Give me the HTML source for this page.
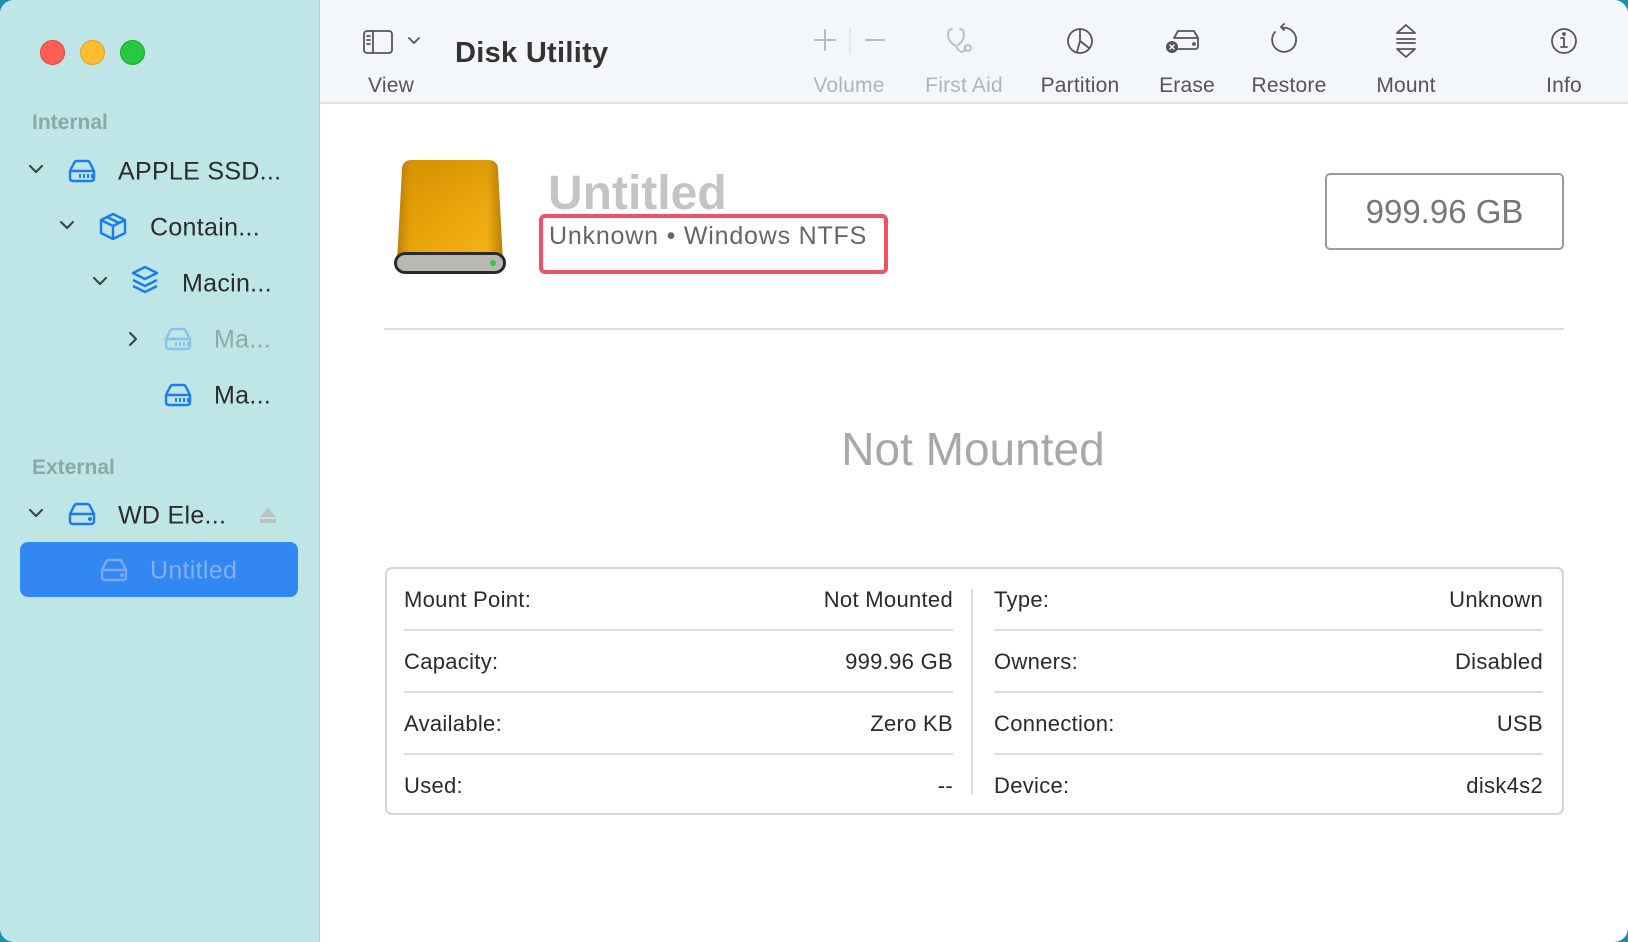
<!DOCTYPE html>
<html><head><meta charset="utf-8"><style>
*{margin:0;padding:0;box-sizing:border-box}
body{width:1628px;height:942px;overflow:hidden;background:#1f8fa6;font-family:"Liberation Sans",sans-serif;position:relative}
.win{position:absolute;left:0;top:0;width:1628px;height:942px;border-radius:14px;overflow:hidden;background:#fff}
.side{position:absolute;left:0;top:0;width:320px;height:942px;background:#bfe6e6;border-right:1px solid #b4d4d4}
.tb{position:absolute;left:320px;top:0;right:0;height:104px;background:#f3f7f9;border-bottom:2px solid #dde1e3}
.a{position:absolute;white-space:nowrap}
.dot{position:absolute;width:25px;height:25px;border-radius:50%;top:40px}
.sl{font-size:21px;font-weight:bold;color:#8aa8a8}
.it{font-size:25px;color:#2b2b2b;transform:translateY(-50%);letter-spacing:.3px}
.lab{font-size:21px;color:#555;transform:translateX(-50%);top:74px;letter-spacing:.2px}
.dim{color:#b0b4b6}
.row{font-size:22px;color:#2a2a2a;letter-spacing:.3px}
.hr{position:absolute;height:2px;background:#dcdcdc}
</style></head><body><div class="win">
<div class="side"></div>
<div class="dot" style="left:40px;background:#ff5f57;border:1px solid #e14640"></div>
<div class="dot" style="left:80px;background:#febc2e;border:1px solid #dfa123"></div>
<div class="dot" style="left:120px;background:#28c840;border:1px solid #1aab29"></div>
<div class="a sl" style="left:32px;top:111px">Internal</div>
<div class="a sl" style="left:32px;top:456px">External</div>

<svg width="320" height="942" style="position:absolute;left:0;top:0">
<defs>
<g id="hd"><path d="M4 10 L8 2 Q9 0 11 0 H21 Q23 0 24 2 L28 10 V17 Q28 20 25 20 H7 Q4 20 4 17 Z M4 10 H28" fill="none" stroke-width="2.4" stroke-linejoin="round"/></g>
</defs>
<g fill="none" stroke="#3b4a4a" stroke-width="2.2" stroke-linecap="round" stroke-linejoin="round">
<path d="M30 166 l6 6 l6 -6"/><path d="M61 222 l6 6 l6 -6"/><path d="M94 278 l6 6 l6 -6"/><path d="M130 333 l6 6 l-6 6"/><path d="M30 510 l6 6 l6 -6"/>
</g>
<g stroke="#1a7cf5"><use href="#hd" x="66" y="161"/></g>
<g fill="#1a7cf5"><rect x="79" y="174" width="2" height="4"/><rect x="83" y="174" width="2" height="4"/><rect x="87" y="174" width="2" height="4"/><rect x="91" y="174" width="2" height="4"/></g>
<g fill="none" stroke="#1a7cf5" stroke-width="2.4" stroke-linejoin="round"><path d="M113 214 l12 6 v13 l-12 6 l-12 -6 v-13 z M101 220 l12 6 l12 -6 M113 226 v13 M107 217 l12 6"/>
<path d="M145 267 l12 6 l-12 6 l-12 -6 z M133 280 l12 6 l12 -6 M133 286 l12 6 l12 -6"/></g>
<g stroke="#88c2ee"><use href="#hd" x="162" y="329"/></g>
<g fill="#88c2ee"><rect x="175" y="342" width="2" height="4"/><rect x="179" y="342" width="2" height="4"/><rect x="183" y="342" width="2" height="4"/><rect x="187" y="342" width="2" height="4"/></g>
<g stroke="#1a7cf5"><use href="#hd" x="162" y="385"/></g>
<g fill="#1a7cf5"><rect x="175" y="398" width="2" height="4"/><rect x="179" y="398" width="2" height="4"/><rect x="183" y="398" width="2" height="4"/><rect x="187" y="398" width="2" height="4"/></g>
<g stroke="#1a7cf5"><use href="#hd" x="66" y="504"/></g><circle cx="90" cy="519" r="2" fill="#1a7cf5"/>
<path d="M260 517 l8 -9 l8 9 z" fill="#bcc0c0"/><rect x="260" y="519" width="16" height="4" fill="#bcc0c0"/>
<rect x="20" y="542" width="278" height="55" rx="8" fill="#3387f2"/>
<g stroke="#79a9ef"><use href="#hd" x="98" y="560"/></g><circle cx="122" cy="575" r="2" fill="#79a9ef"/>
</svg>
<div class="a it" style="left:118px;top:172px">APPLE SSD...</div>
<div class="a it" style="left:150px;top:228px">Contain...</div>
<div class="a it" style="left:182px;top:284px">Macin...</div>
<div class="a it" style="left:214px;top:340px;color:#8fa8a8">Ma...</div>
<div class="a it" style="left:214px;top:396px">Ma...</div>
<div class="a it" style="left:118px;top:516px">WD Ele...</div>
<div class="a it" style="left:150px;top:571px;color:#7fb0f2">Untitled</div>

<div class="tb"></div>
<svg width="1628" height="104" style="position:absolute;left:0;top:0" fill="none" stroke-linecap="round" stroke-linejoin="round">
<g stroke="#555" stroke-width="1.8"><rect x="364" y="31" width="28" height="22" rx="3"/><path d="M373 31 v22 M367 36 h3 M367 40 h3 M367 44 h3"/><path d="M409 38 l5 5 l5 -5"/></g>
<g stroke="#b8bcbe" stroke-width="2"><path d="M825 30 v20 M815 40 h20 M866 40 h18"/></g>
<path d="M850 29 v24" stroke="#dde" stroke-width="1.5"/>
<g stroke="#b8bcbe" stroke-width="1.8"><path d="M952 29 q-4 0 -4 5 q0 8 8 12 q3 6 6 6 q3 0 3 -6 M960 29 q4 0 4 5 q0 7 -6 11"/><circle cx="968" cy="48" r="3"/></g>
<g stroke="#555" stroke-width="1.8">
<circle cx="1080" cy="41" r="12"/><path d="M1080 29 v12 l9 7 M1080 41 l-3 11"/>
<path d="M1174 38 l4 -7 h16 l4 7 v8 q0 3 -3 3 h-18 M1174 38 h24"/><circle cx="1194" cy="44" r="1" fill="#555"/>
<path d="M1284 30 l-3 -3 l3 -3 M1282 28 a12 12 0 1 1 -7 4"/>
<path d="M1397 33 l9 -8 l9 8 z M1397 39 h18 M1397 43 h18 M1397 49 l9 8 l9 -8 z"/>
<circle cx="1564" cy="41" r="12"/><path d="M1564 38 v9 M1561 47 h6 M1561 38 h3"/><circle cx="1564" cy="34" r="1" fill="#555"/>
</g>
<circle cx="1172" cy="47" r="6" fill="#555"/><path d="M1170 45 l4 4 M1174 45 l-4 4" stroke="#fff" stroke-width="1.4"/>
</svg>
<div class="a" style="left:455px;top:37px;font-size:29px;font-weight:bold;color:#333;letter-spacing:.3px">Disk Utility</div>
<div class="a lab" style="left:391px">View</div>
<div class="a lab dim" style="left:849px">Volume</div>
<div class="a lab dim" style="left:964px">First Aid</div>
<div class="a lab" style="left:1080px">Partition</div>
<div class="a lab" style="left:1187px">Erase</div>
<div class="a lab" style="left:1289px">Restore</div>
<div class="a lab" style="left:1406px">Mount</div>
<div class="a lab" style="left:1564px">Info</div>

<svg width="130" height="130" style="position:absolute;left:385px;top:152px">
<defs><linearGradient id="g" x1="0" x2="1"><stop offset="0" stop-color="#9a6600"/><stop offset=".12" stop-color="#e09800"/><stop offset=".85" stop-color="#f2ad10"/><stop offset="1" stop-color="#986400"/></linearGradient>
<linearGradient id="g2" x1="0" y1="0" x2="0" y2="1"><stop offset="0" stop-color="#c98a00" stop-opacity=".5"/><stop offset="1" stop-color="#ffc020" stop-opacity=".3"/></linearGradient></defs>
<path d="M17 18 Q17 8 27 8 H103 Q113 8 113 18 L118 110 H12 Z" fill="url(#g)"/>
<path d="M17 18 Q17 8 27 8 H103 Q113 8 113 18 L118 110 H12 Z" fill="url(#g2)"/>
<rect x="9" y="100" width="112" height="22" rx="11" fill="#2a2a2a"/>
<rect x="12" y="103" width="106" height="16" rx="8" fill="#b9b9b4"/>
<circle cx="108" cy="111" r="3" fill="#3c3"/>
</svg>
<div class="a" style="left:548px;top:166px;font-size:48px;font-weight:bold;color:#c4c4c4">Untitled</div>
<div class="a" style="left:539px;top:214px;width:349px;height:60px;border:4px solid #f0506a;border-radius:6px"></div>
<div class="a" style="left:549px;top:222px;font-size:25px;color:#666;letter-spacing:.8px">Unknown • Windows NTFS</div>
<div class="a" style="left:1325px;top:173px;width:239px;height:77px;border:2px solid #9a9a9a;border-radius:5px;font-size:33px;color:#777;text-align:center;line-height:73px">999.96 GB</div>
<div class="hr" style="left:384px;top:328px;width:1180px"></div>
<div class="a" style="left:0;width:1946px;text-align:center;top:422px;font-size:46px;color:#a8a8a8">Not Mounted</div>

<div class="a" style="left:385px;top:567px;width:1179px;height:248px;border:2px solid #d4d4d4;border-radius:7px"></div>
<div class="a" style="left:971px;top:589px;width:2px;height:205px;background:#dcdcdc"></div>
<div class="hr" style="left:404px;top:629px;width:549px"></div><div class="hr" style="left:404px;top:691px;width:549px"></div><div class="hr" style="left:404px;top:753px;width:549px"></div>
<div class="hr" style="left:994px;top:629px;width:549px"></div><div class="hr" style="left:994px;top:691px;width:549px"></div><div class="hr" style="left:994px;top:753px;width:549px"></div>
<div class="a row" style="left:404px;top:587px">Mount Point:</div><div class="a row" style="right:675px;top:587px">Not Mounted</div>
<div class="a row" style="left:404px;top:649px">Capacity:</div><div class="a row" style="right:675px;top:649px">999.96 GB</div>
<div class="a row" style="left:404px;top:711px">Available:</div><div class="a row" style="right:675px;top:711px">Zero KB</div>
<div class="a row" style="left:404px;top:773px">Used:</div><div class="a row" style="right:675px;top:773px">--</div>
<div class="a row" style="left:994px;top:587px">Type:</div><div class="a row" style="right:85px;top:587px">Unknown</div>
<div class="a row" style="left:994px;top:649px">Owners:</div><div class="a row" style="right:85px;top:649px">Disabled</div>
<div class="a row" style="left:994px;top:711px">Connection:</div><div class="a row" style="right:85px;top:711px">USB</div>
<div class="a row" style="left:994px;top:773px">Device:</div><div class="a row" style="right:85px;top:773px">disk4s2</div>
</div></body></html>
